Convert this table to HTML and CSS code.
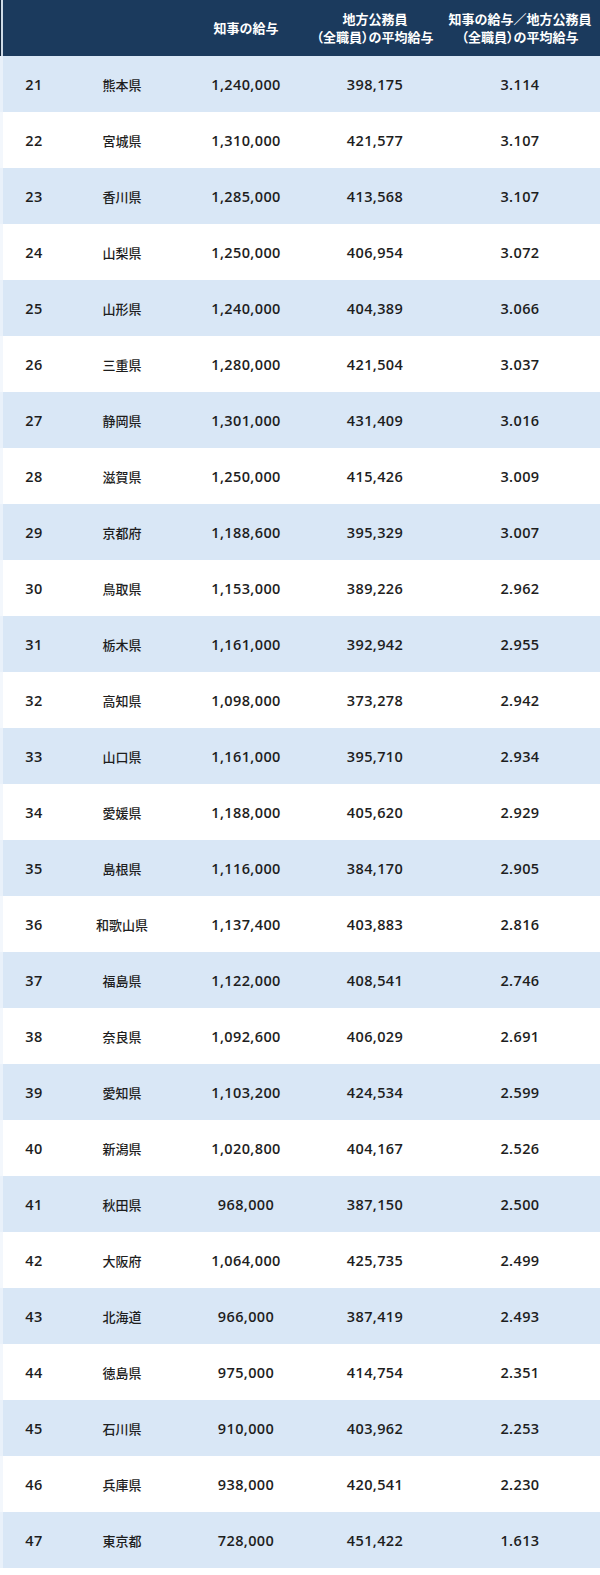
FILE: index.html
```html
<!DOCTYPE html>
<html lang="ja">
<head>
<meta charset="utf-8">
<title>知事の給与ランキング</title>
<link rel="stylesheet" href="styles.css">
</head>
<body>
<table class="ranking">
  <colgroup>
    <col class="c-rank"><col class="c-pref"><col class="c-gov"><col class="c-staff"><col class="c-ratio">
  </colgroup>
  <thead>
    <tr class="head">
      <th></th>
      <th></th>
      <th>知事の給与</th>
      <th>地方公務員<br><span class="p">（</span>全職員<span class="p">）</span>の平均給与</th>
      <th class="ratio">知事の給与／地方公務員<br><span class="p">（</span>全職員<span class="p">）</span>の平均給与</th>
    </tr>
  </thead>
  <tbody>
    <tr><td class="rank">21</td><td class="pref">熊本県</td><td>1,240,000</td><td>398,175</td><td class="ratio">3.114</td></tr>
    <tr><td class="rank">22</td><td class="pref">宮城県</td><td>1,310,000</td><td>421,577</td><td class="ratio">3.107</td></tr>
    <tr><td class="rank">23</td><td class="pref">香川県</td><td>1,285,000</td><td>413,568</td><td class="ratio">3.107</td></tr>
    <tr><td class="rank">24</td><td class="pref">山梨県</td><td>1,250,000</td><td>406,954</td><td class="ratio">3.072</td></tr>
    <tr><td class="rank">25</td><td class="pref">山形県</td><td>1,240,000</td><td>404,389</td><td class="ratio">3.066</td></tr>
    <tr><td class="rank">26</td><td class="pref">三重県</td><td>1,280,000</td><td>421,504</td><td class="ratio">3.037</td></tr>
    <tr><td class="rank">27</td><td class="pref">静岡県</td><td>1,301,000</td><td>431,409</td><td class="ratio">3.016</td></tr>
    <tr><td class="rank">28</td><td class="pref">滋賀県</td><td>1,250,000</td><td>415,426</td><td class="ratio">3.009</td></tr>
    <tr><td class="rank">29</td><td class="pref">京都府</td><td>1,188,600</td><td>395,329</td><td class="ratio">3.007</td></tr>
    <tr><td class="rank">30</td><td class="pref">鳥取県</td><td>1,153,000</td><td>389,226</td><td class="ratio">2.962</td></tr>
    <tr><td class="rank">31</td><td class="pref">栃木県</td><td>1,161,000</td><td>392,942</td><td class="ratio">2.955</td></tr>
    <tr><td class="rank">32</td><td class="pref">高知県</td><td>1,098,000</td><td>373,278</td><td class="ratio">2.942</td></tr>
    <tr><td class="rank">33</td><td class="pref">山口県</td><td>1,161,000</td><td>395,710</td><td class="ratio">2.934</td></tr>
    <tr><td class="rank">34</td><td class="pref">愛媛県</td><td>1,188,000</td><td>405,620</td><td class="ratio">2.929</td></tr>
    <tr><td class="rank">35</td><td class="pref">島根県</td><td>1,116,000</td><td>384,170</td><td class="ratio">2.905</td></tr>
    <tr><td class="rank">36</td><td class="pref">和歌山県</td><td>1,137,400</td><td>403,883</td><td class="ratio">2.816</td></tr>
    <tr><td class="rank">37</td><td class="pref">福島県</td><td>1,122,000</td><td>408,541</td><td class="ratio">2.746</td></tr>
    <tr><td class="rank">38</td><td class="pref">奈良県</td><td>1,092,600</td><td>406,029</td><td class="ratio">2.691</td></tr>
    <tr><td class="rank">39</td><td class="pref">愛知県</td><td>1,103,200</td><td>424,534</td><td class="ratio">2.599</td></tr>
    <tr><td class="rank">40</td><td class="pref">新潟県</td><td>1,020,800</td><td>404,167</td><td class="ratio">2.526</td></tr>
    <tr><td class="rank">41</td><td class="pref">秋田県</td><td>968,000</td><td>387,150</td><td class="ratio">2.500</td></tr>
    <tr><td class="rank">42</td><td class="pref">大阪府</td><td>1,064,000</td><td>425,735</td><td class="ratio">2.499</td></tr>
    <tr><td class="rank">43</td><td class="pref">北海道</td><td>966,000</td><td>387,419</td><td class="ratio">2.493</td></tr>
    <tr><td class="rank">44</td><td class="pref">徳島県</td><td>975,000</td><td>414,754</td><td class="ratio">2.351</td></tr>
    <tr><td class="rank">45</td><td class="pref">石川県</td><td>910,000</td><td>403,962</td><td class="ratio">2.253</td></tr>
    <tr><td class="rank">46</td><td class="pref">兵庫県</td><td>938,000</td><td>420,541</td><td class="ratio">2.230</td></tr>
    <tr><td class="rank">47</td><td class="pref">東京都</td><td>728,000</td><td>451,422</td><td class="ratio">1.613</td></tr>
  </tbody>
</table>
</body>
</html>
```

FILE: styles.css
```css
html, body {
  margin: 0;
  padding: 0;
  background: #ffffff;
}

body {
  font-family: "Open Sans", "Noto Sans", "Noto Sans CJK JP", sans-serif;
  color: #1e1e1e;
}

.ranking {
  width: 600px;
  border-collapse: collapse;
  table-layout: fixed;
}

.c-rank { width: 68px; }
.c-pref { width: 108px; }
.c-gov { width: 140px; }
.c-staff { width: 118px; }
.c-ratio { width: 166px; }

.head {
  height: 56px;
  background: linear-gradient(to right, #10243b 0 1px, #cfdbe7 1px 3px, #1b3a5d 3px);
}

.head th {
  padding: 0;
  color: #ffffff;
  font-family: "Noto Sans CJK JP", sans-serif;
  font-size: 13px;
  font-weight: 700;
  line-height: 18px;
  text-align: center;
  vertical-align: middle;
  white-space: nowrap;
}

.head .p {
  font-feature-settings: "palt";
}

tbody tr {
  height: 56px;
  background: linear-gradient(to right, #f3f7fc 0 3px, #ffffff 3px);
}

tbody tr:nth-child(odd) {
  background: linear-gradient(to right, #e9f1fa 0 3px, #d9e7f6 3px);
}

tbody td {
  padding: 0;
  text-align: center;
  vertical-align: middle;
  font-size: 14.5px;
  font-weight: 600;
  letter-spacing: 0.4px;
}

tbody td.pref {
  font-family: "Noto Sans CJK JP", sans-serif;
  font-size: 13px;
  font-weight: 500;
  letter-spacing: 0;
}

tbody td.ratio {
  padding-left: 6px;
}

.head th.ratio {
  padding-left: 6px;
}
```
